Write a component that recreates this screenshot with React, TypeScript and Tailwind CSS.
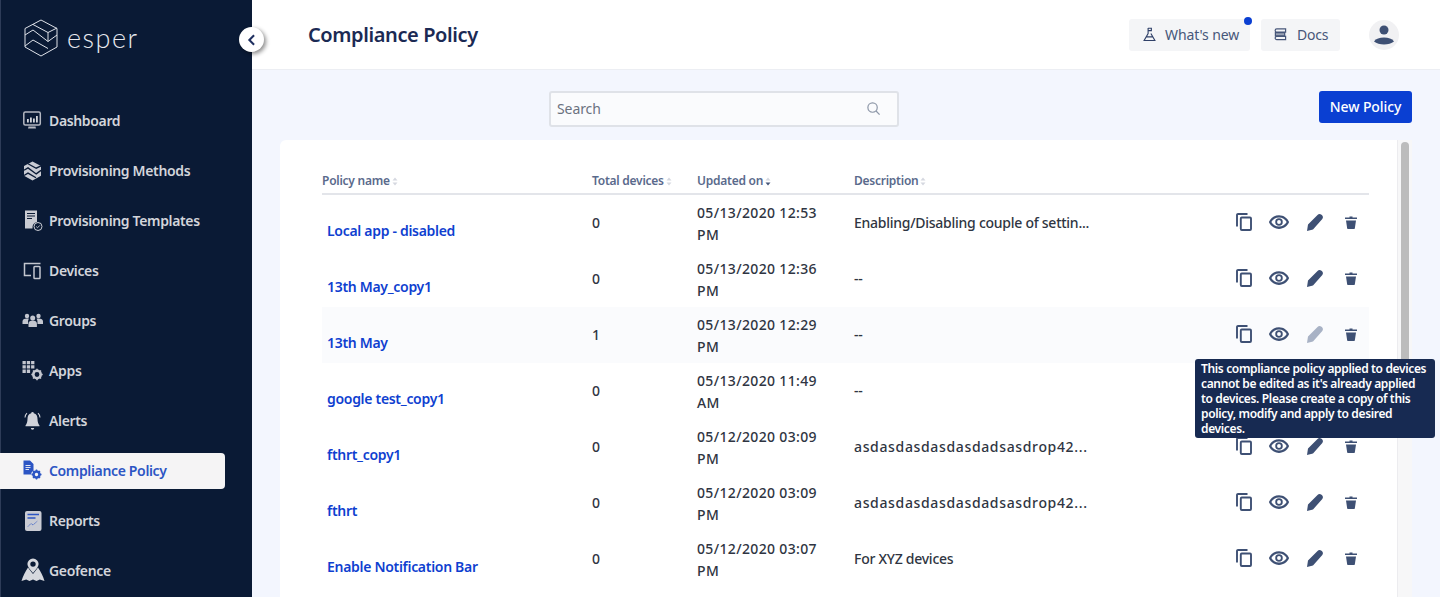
import React from "react";

const navIcon = "w-[22px] h-[22px] shrink-0";

const DashboardIcon = () => (
  <svg viewBox="0 0 22 22" className={navIcon} fill="none">
    <rect x="1.800" y="2" width="16.500" height="13" rx="1.500" stroke="#b4b7c1" strokeWidth="1.500" />
    <path d="M5 12.500V9h1.800v3.500zM8 12.500V7.500h1.800v5zM11 12.500V8.500h1.800v4zM14 12.500V6h1.800v6.500z" fill="#d3d5db" />
    <path d="M6.500 16.500h7l.5 2H6z" fill="#b4b7c1" />
  </svg>
);
const MethodsIcon = () => (
  <svg viewBox="0 0 22 22" className={navIcon}>
    <path d="M10.500 1.500l8.500 4.600v9.600l-8.500 4.800L2 15.700V6.100z" fill="#c9cbd3" />
    <path d="M6 3.800l8.200 4.400 4.800-2.300M2 10.300l4-2.400 8.200 6 4.800-3.500M2 15.500l4-2.400 8 4.600" fill="none" stroke="#0a1a35" strokeWidth="1.300" />
  </svg>
);
const TemplatesIcon = () => (
  <svg viewBox="0 0 22 22" className={navIcon}>
    <path d="M3 0.500h12v11.500a5.500 5.500 0 0 0-4.500 6.500H3z" fill="#c9cbd3" />
    <path d="M5 3.500h8M5 6h8M5 8.500h5" stroke="#0a1a35" strokeWidth="1.100" />
    <circle cx="16" cy="16.500" r="4" fill="none" stroke="#c9cbd3" strokeWidth="1" />
    <path d="M14.200 16.500l1.300 1.300 2.300-2.400" fill="none" stroke="#c9cbd3" strokeWidth="0.900" />
  </svg>
);
const DevicesIcon = () => (
  <svg viewBox="0 0 22 22" className={navIcon} fill="none" stroke="#c3c6cf" strokeWidth="1.500">
    <path d="M9 15.500H2.500V3.500h16" />
    <rect x="12" y="6.500" width="6" height="12" rx="0.800" />
  </svg>
);
const GroupsIcon = () => (
  <svg viewBox="0 0 22 22" className="w-[22px] h-[22px] shrink-0" fill="#c3c6cf">
    <circle cx="5" cy="6" r="2.200" />
    <circle cx="16.500" cy="6" r="2.200" />
    <circle cx="10.700" cy="8" r="2.500" />
    <path d="M0.500 14v-2.500c0-2 1.500-3 4.500-3 .8 0 1.500.1 2 .3-.8.700-1 1.800-1 5.200zM21 14v-2.500c0-2-1.500-3-4.500-3-.8 0-1.500.1-2 .3.800.700 1 1.800 1 5.200zM6.500 17v-3.500c0-2 1.800-3 4.200-3s4.200 1 4.200 3V17z" />
  </svg>
);
const AppsIcon = () => (
  <svg viewBox="0 0 22 22" className={navIcon} fill="#c3c6cf">
    <path d="M0.500 1h3.300v3.300H0.500zM4.800 1h3.300v3.300H4.800zM9.100 1h3.300v3.300H9.100zM0.500 5.300h3.300v3.300H0.500zM4.800 5.300h3.300v3.300H4.800zM9.100 5.300h3.300v3.300H9.100zM0.500 9.600h3.300v3.300H0.500zM4.800 9.600h3.300v3.300H4.800z" />
    <circle cx="15" cy="14.500" r="3.700" fill="none" stroke="#c3c6cf" strokeWidth="2.600" />
    <path d="M15 8.800v11.400M9.300 14.500h11.400M11 10.500l8 8M19 10.500l-8 8" stroke="#c3c6cf" strokeWidth="1.500" strokeDasharray="1.800 7.800" />
  </svg>
);
const AlertsIcon = () => (
  <svg viewBox="0 0 22 22" className={navIcon} fill="#d0d2d9">
    <path d="M10.500 2a1.300 1.300 0 0 1 1.300 1.300c2.700.7 3.700 2.700 3.700 5.700 0 3 .8 5 2 6.500v.8H3.500v-.8c1.200-1.500 2-3.500 2-6.500 0-3 1-5 3.700-5.700A1.300 1.300 0 0 1 10.500 2z" />
    <path d="M8.800 18h3.400a1.700 1.700 0 0 1-3.400 0z" />
    <path d="M3 7.500c.1-1.800.8-3.200 2-4.300M18 7.500c-.1-1.800-.8-3.200-2-4.300" fill="none" stroke="#d0d2d9" strokeWidth="1.100" />
  </svg>
);
const ComplianceIcon = () => (
  <svg viewBox="0 0 22 22" className={navIcon}>
    <path d="M1.500 0.500h6.500l3.500 3.500v6.500a5 5 0 0 0-2.500 4H1.500z" fill="#2c55c4" />
    <path d="M3.500 5.500h5M3.500 7.500h5M3.500 9.500h3.500" stroke="#f5f4f5" strokeWidth="0.900" />
    <circle cx="14.500" cy="14.500" r="3" fill="none" stroke="#2c55c4" strokeWidth="2.600" />
    <path d="M14.500 9.500v10M9.500 14.500h10M11 11l7 7M18 11l-7 7" stroke="#2c55c4" strokeWidth="1.400" strokeDasharray="1.500 7" />
  </svg>
);
const ReportsIcon = () => (
  <svg viewBox="0 0 22 22" className={navIcon}>
    <rect x="3" y="1" width="16.500" height="20" rx="2" fill="#c9cbd3" />
    <path d="M5.500 4.500h11.500M5.500 8h8" stroke="#2c55c4" strokeWidth="1.300" />
    <path d="M6 16.500l3-3 2 1.500 4.500-4" fill="none" stroke="#2c55c4" strokeWidth="0.900" strokeDasharray="1.500 1" />
  </svg>
);
const GeofenceIcon = () => (
  <svg viewBox="0 0 24 24" className="w-[24px] h-[24px] shrink-0 -ml-[1px] -mr-[1px] -mt-[2px]" fill="#d6d8de">
    <path fillRule="evenodd" d="M12 0.500a5.600 5.600 0 0 1 5.600 5.600c0 2.500-2.700 5.500-5.600 9-2.900-3.500-5.600-6.500-5.600-9A5.600 5.600 0 0 1 12 0.500zm0 2.900a2.700 2.700 0 1 0 0 5.400 2.700 2.700 0 0 0 0-5.400z" />
    <path d="M7 9.500c1.300 2 3 4 5 6.500 2-2.500 3.700-4.500 5-6.500 2.500 4 5 8 6.500 13.500l-4.700-1.500-3.300 1.500-3.500-1.500-3.500 1.500-3.300-1.500L0.500 23C2 17.500 4.500 13.500 7 9.500z" />
  </svg>
);

const navItems = [
  { label: "Dashboard", icon: <DashboardIcon /> },
  { label: "Provisioning Methods", icon: <MethodsIcon /> },
  { label: "Provisioning Templates", icon: <TemplatesIcon /> },
  { label: "Devices", icon: <DevicesIcon /> },
  { label: "Groups", icon: <GroupsIcon /> },
  { label: "Apps", icon: <AppsIcon /> },
  { label: "Alerts", icon: <AlertsIcon /> },
  { label: "Compliance Policy", icon: <ComplianceIcon />, active: true },
  { label: "Reports", icon: <ReportsIcon /> },
  { label: "Geofence", icon: <GeofenceIcon /> },
];

const policies = [
  { name: "Local app - disabled", total: "0", date: "05/13/2020 12:53", ampm: "PM", desc: "Enabling/Disabling couple of settin..." },
  { name: "13th May_copy1", total: "0", date: "05/13/2020 12:36", ampm: "PM", desc: "--" },
  { name: "13th May", total: "1", date: "05/13/2020 12:29", ampm: "PM", desc: "--", locked: true },
  { name: "google test_copy1", total: "0", date: "05/13/2020 11:49", ampm: "AM", desc: "--" },
  { name: "fthrt_copy1", total: "0", date: "05/12/2020 03:09", ampm: "PM", desc: "asdasdasdasdasdadsasdrop42...", wide: true },
  { name: "fthrt", total: "0", date: "05/12/2020 03:09", ampm: "PM", desc: "asdasdasdasdasdadsasdrop42...", wide: true },
  { name: "Enable Notification Bar", total: "0", date: "05/12/2020 03:07", ampm: "PM", desc: "For XYZ devices" },
];

const Logo = () => (
  <svg viewBox="0 0 34 38" className="w-[34px] h-[38px] shrink-0" fill="none" stroke="#dfe2e9" strokeWidth="1">
    <path d="M17 1l16 8.500v18.500l-16 9-16-9V9.500z" />
    <path d="M9 5.500l15 8 9-4.500M24 13.500v9M1 16l8-5 15 11.500 9-6.500M1 27l8-6 15 8.500" />
  </svg>
);

const Sort = ({ down }: { down?: boolean }) => (
  <svg viewBox="0 0 6 9" className="w-[6px] h-[9px] ml-[2px]">
    <path d="M3 0.500l2.500 3h-5z" fill="#d5d8e0" />
    <path d="M3 8.500l2.500-3h-5z" fill={down ? "#47577a" : "#d5d8e0"} />
  </svg>
);

const Actions = ({ locked }: { locked?: boolean }) => (
  <div className="flex items-center h-full pb-[2px]">
    <svg viewBox="0 0 16 18" className="w-[16px] h-[18px] ml-[2px]" fill="none" stroke="#3e5074" strokeWidth="1.900">
      <path d="M1 13.500V2a1 1 0 0 1 1-1h9.500" />
      <rect x="4.800" y="4.500" width="10.200" height="12.500" rx="1" />
    </svg>
    <svg viewBox="0 0 24 24" className="w-[22px] h-[22px] ml-[16px]" fill="#3e5074">
      <path d="M12 4.500C7 4.500 2.700 7.600 1 12c1.700 4.400 6 7.500 11 7.500s9.300-3.100 11-7.500c-1.700-4.400-6-7.500-11-7.500zM12 16.900c-3.600 0-6.900-1.900-8.400-4.900 1.500-3 4.800-4.900 8.400-4.900s6.900 1.900 8.400 4.900c-1.500 3-4.800 4.900-8.400 4.900zm0-9a4.100 4.100 0 1 0 0 8.200 4.100 4.100 0 0 0 0-8.200zm0 6.200a2.100 2.100 0 1 1 0-4.200 2.100 2.100 0 0 1 0 4.200z" />
    </svg>
    <svg viewBox="0 0 16 17" className="w-[16px] h-[17px] ml-[17px]" fill={locked ? "#a8b2c5" : "#3e5074"}>
      <path d="M0 17l1-6.500L10.500 1c1.200-1.200 2.600-1.300 4-.2 1.500 1.200 1.900 2.800.8 4.200L6 15.500z" />
    </svg>
    <svg viewBox="0 0 12 13" className="w-[12px] h-[13px] ml-[22px]" fill="#3e5074">
      <path d="M4.500 0.500h3v1H12V3H0V1.500h4.500zM1 4.500h10L9.800 12.500a.6.6 0 0 1-.6.500H2.800a.6.6 0 0 1-.6-.500z" />
    </svg>
  </div>
);

export default function App() {
  return (
    <div className="flex h-[597px] w-[1440px] overflow-hidden bg-[#f3f6fe] font-['Noto_Sans',sans-serif]">
      <aside className="w-[252px] shrink-0 bg-[#0a1a35] border-l border-[#2e3c58] flex flex-col">
        <div className="flex items-start gap-[9px] pl-[23px] pt-[19px] h-[96px]">
          <Logo />
          <span className="text-[27px] leading-[38px] font-['Lato',sans-serif] font-light tracking-[1.500px] text-[#e8eaf0]">esper</span>
        </div>
        <nav className="flex flex-col">
          {navItems.map((item) => (
            <div key={item.label} className="h-[50px] flex items-center">
              <div className={item.active ? "flex items-center h-[36px] w-[225px] -ml-px rounded-r-[4px] bg-[#f5f4f5] pl-[22px] gap-[5px] text-[#2c55c4]" : "flex items-center h-[36px] w-[224px] pl-[21px] gap-[5px] text-[#d3d5db]"}>
                {item.icon}
                <span className="text-[14px] font-semibold leading-none tracking-[-0.35px]">{item.label}</span>
              </div>
            </div>
          ))}
        </nav>
      </aside>

      <button className="absolute left-[239px] top-[27px] w-[25px] h-[25px] rounded-full bg-white shadow-[2px_2px_4px_rgba(0,0,0,0.45)] flex items-center justify-center">
        <svg viewBox="0 0 10 14" className="w-[9px] h-[12px]" fill="none" stroke="#1f2f60" strokeWidth="2.400">
          <path d="M8 1.500L2.500 7 8 12.500" />
        </svg>
      </button>

      <div className="flex-1 flex flex-col min-w-0">
        <header className="h-[70px] shrink-0 bg-white border-b border-[#eceef3] flex items-center pl-[56px] pr-[41px]">
          <h1 className="text-[20px] font-semibold text-[#1b2a54] tracking-[-0.4px]">Compliance Policy</h1>
          <div className="ml-auto flex items-center">
            <div className="relative h-[32px] w-[121px] mr-[11px] rounded-[3px] bg-[#f4f5f7] flex items-center pl-[14px] gap-[9px] text-[14px] tracking-[-0.1px] text-[#47577a]">
              <svg viewBox="0 0 14 16" className="w-[13px] h-[15px]" fill="none" stroke="#2f4068" strokeWidth="1.200">
                <path d="M5.500 1v6L1.200 14.500h11.600L8.500 7M5.500 1.300h3.500v2.500H5.500M3.500 10.500h7" />
              </svg>
              What's new
              <span className="absolute right-[-2px] top-[-2px] w-[8px] h-[8px] rounded-full bg-[#0a3fd2]" />
            </div>
            <div className="h-[32px] w-[79px] rounded-[3px] bg-[#f4f5f7] flex items-center pl-[13px] gap-[10px] text-[14px] tracking-[-0.2px] text-[#47577a]">
              <svg viewBox="0 0 14 14" className="w-[13px] h-[13px]" fill="none" stroke="#47577a" strokeWidth="1.300">
                <path d="M3 1h9.500v3.500H3a1.750 1.750 0 0 1 0-3.500z" />
                <path d="M1.500 5h10v3.500h-10z" fill="#9aa3b5" />
                <path d="M3 9h9.500v3.500H3a1.750 1.750 0 0 1 0-3.500z" />
              </svg>
              Docs
            </div>
            <div className="ml-[29px] w-[30px] h-[30px] rounded-full bg-[#f1f1f3] flex items-center justify-center">
              <svg viewBox="0 0 30 30" className="w-[30px] h-[30px]" fill="#3e5074">
                <circle cx="15" cy="10" r="4.500" />
                <path d="M5 21.500c2-3 5.500-4 10-4s8 1 10 4c-2.500 2-6 3-10 3s-7.500-1-10-3z" />
              </svg>
            </div>
          </div>
        </header>

        <div className="h-[70px] shrink-0 flex items-start">
          <div className="ml-[297px] mt-[21px] w-[350px] h-[36px] rounded-[3px] border-2 border-[#dfe2e8] bg-[#fafbfd] flex items-center pl-[6px] pr-[16px] text-[14px] tracking-[-0.1px] text-[#6b7280]">
            <span className="pb-[2px]">Search</span>
            <svg viewBox="0 0 16 16" className="w-[15px] h-[15px] ml-auto mb-[2px]" fill="none" stroke="#8d97a8" strokeWidth="1.300">
              <circle cx="7" cy="7" r="5" />
              <path d="M10.700 10.700L14.500 14.500" />
            </svg>
          </div>
          <button className="ml-[420px] mt-[21px] w-[93px] h-[32px] rounded-[3px] bg-[#0a3fd2] text-white text-[14px] font-medium tracking-[-0.1px] pb-[2px]">New Policy</button>
        </div>

        <div className="flex-1 flex ml-[28px] mr-[28px] min-h-0">
          <section className="flex-1 rounded-tl-[6px] bg-white pl-[42px] pr-[28px] pt-[32px] overflow-hidden">
            <div className="flex items-center h-[23px] border-b-2 border-[#e3e5ea] text-[12px] font-semibold text-[#5a6a8c] tracking-[-0.25px] pb-[3px]">
              <div className="w-[270px] flex items-center">Policy name<Sort /></div>
              <div className="w-[105px] flex items-center">Total devices<Sort /></div>
              <div className="w-[157px] flex items-center">Updated on<Sort down /></div>
              <div className="flex items-center">Description<Sort /></div>
            </div>
            {policies.map((p) => (
              <div key={p.name} className={p.locked ? "flex h-[56px] bg-[#fafbfd] text-[14px] text-[#2f3542]" : "flex h-[56px] text-[14px] text-[#2f3542]"}>
                <div className="w-[270px] pl-[5px] pt-[26px] leading-[20px] font-semibold text-[#0f3fd0] tracking-[-0.3px]">{p.name}</div>
                <div className="w-[105px] flex items-center pb-[2px] font-medium">{p.total}</div>
                <div className="w-[157px] flex flex-col justify-center pt-[2px] leading-[22px] font-medium tracking-[0.35px]">
                  <span>{p.date}</span>
                  <span>{p.ampm}</span>
                </div>
                <div className={p.wide ? "w-[380px] flex items-center pb-[2px] font-medium tracking-[0.65px]" : "w-[380px] flex items-center pb-[2px] font-medium tracking-[-0.26px]"}>{p.desc}</div>
                <Actions locked={p.locked} />
              </div>
            ))}
          </section>
          <div className="w-[15px] shrink-0 bg-[#f7f7f8] border-l border-[#ececef] pl-[3px] pt-[2px]">
            <div className="w-[8px] h-[280px] rounded-[4px] bg-[#bcbcbc]" />
          </div>
        </div>
      </div>

      <div className="absolute left-[1195px] top-[359px] w-[240px] h-[79px] rounded-[3px] bg-[#172a52] text-white text-[12px] font-semibold tracking-[-0.35px] leading-[15px] px-[6px] pt-[2px]">
        This compliance policy applied to devices cannot be edited as it's already applied to devices. Please create a copy of this policy, modify and apply to desired devices.
      </div>
    </div>
  );
}
